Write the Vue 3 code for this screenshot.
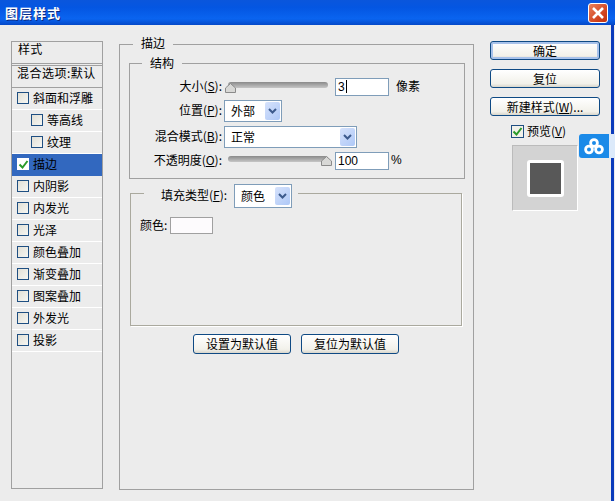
<script setup>
const styles = [
  { label: '斜面和浮雕' },
  { label: '等高线', sub: true },
  { label: '纹理', sub: true },
  { label: '描边', on: true },
  { label: '内阴影' },
  { label: '内发光' },
  { label: '光泽' },
  { label: '颜色叠加' },
  { label: '渐变叠加' },
  { label: '图案叠加' },
  { label: '外发光' },
  { label: '投影' }
]
</script>

<template>
  <div class="win">
    <header class="title">
      <span class="title-text">图层样式</span>
      <button class="close" aria-label="关闭">
        <svg width="14" height="14" viewBox="0 0 14 14"><path d="M2 2l10 10M12 2L2 12" stroke="#fff" stroke-width="2.6" fill="none"/></svg>
      </button>
    </header>
    <div class="body">
      <aside class="side">
        <div class="side-head">样式</div>
        <div class="side-blend">混合选项:默认</div>
        <div v-for="s in styles" :key="s.label" class="item" :class="{ sub: s.sub, on: s.on }">
          <span class="check">
            <svg v-if="s.on" width="11" height="11" viewBox="0 0 11 11"><path d="M1.5 5.5l3 3 5-6.5" stroke="#2a9a2a" stroke-width="2" fill="none"/></svg>
          </span>
          <span>{{ s.label }}</span>
        </div>
      </aside>

      <main class="main">
        <fieldset class="outer">
          <legend class="lg-outer">描边</legend>
          <fieldset class="struct">
            <legend class="lg-inner">结构</legend>
            <div class="row r1">
              <label class="lbl">大小(<u>S</u>):</label>
              <div class="slider">
                <svg class="thumb" width="11" height="10" viewBox="0 0 11 10"><path d="M5.5.5l5 4.5v4.500H.5V5z" fill="#d8d8d6" stroke="#8a8a8a"/></svg>
              </div>
              <div class="input focus">3<b class="caret"></b></div>
              <span class="unit">像素</span>
            </div>
            <div class="row r2">
              <label class="lbl">位置(<u>P</u>):</label>
              <div class="select w1"><span>外部</span><i class="arrow"><svg width="9" height="6" viewBox="0 0 9 6"><path d="M1 1l3.500 3.500L8 1" stroke="#3c5a8c" stroke-width="2" fill="none"/></svg></i></div>
            </div>
            <div class="row r3">
              <label class="lbl">混合模式(<u>B</u>):</label>
              <div class="select w2"><span>正常</span><i class="arrow"><svg width="9" height="6" viewBox="0 0 9 6"><path d="M1 1l3.500 3.500L8 1" stroke="#3c5a8c" stroke-width="2" fill="none"/></svg></i></div>
            </div>
            <div class="row r4">
              <label class="lbl">不透明度(<u>O</u>):</label>
              <div class="slider">
                <svg class="thumb end" width="11" height="10" viewBox="0 0 11 10"><path d="M5.5.5l5 4.500v4.500H.5V5z" fill="#d8d8d6" stroke="#8a8a8a"/></svg>
              </div>
              <div class="input">100</div>
              <span class="unit pct">%</span>
            </div>
          </fieldset>

          <fieldset class="fill">
            <legend class="lg-fill">
              <span class="fill-label">填充类型(<u>F</u>):</span>
              <div class="select w3"><span>颜色</span><i class="arrow"><svg width="9" height="6" viewBox="0 0 9 6"><path d="M1 1l3.500 3.500L8 1" stroke="#3c5a8c" stroke-width="2" fill="none"/></svg></i></div>
            </legend>
            <div class="color-row">
              <span class="color-label">颜色:</span>
              <div class="swatch"></div>
            </div>
          </fieldset>

          <div class="defaults">
            <button class="btn b2">设置为默认值</button>
            <button class="btn b2">复位为默认值</button>
          </div>
        </fieldset>
      </main>

      <aside class="actions">
        <button class="btn primary">确定</button>
        <button class="btn">复位</button>
        <button class="btn">新建样式(<u>W</u>)...</button>
        <div class="preview-check">
          <span class="check">
            <svg width="11" height="11" viewBox="0 0 11 11"><path d="M1.5 5.5l3 3 5-6.5" stroke="#2a9a2a" stroke-width="2" fill="none"/></svg>
          </span>
          <span>预览(<u>V</u>)</span>
        </div>
        <div class="preview"><div class="square"></div></div>
      </aside>
    </div>

    <div class="float">
      <svg width="20" height="17" viewBox="0 0 20 17"><g fill="none" stroke="#fff" stroke-width="2.8"><circle cx="10" cy="5" r="3.4"/><circle cx="5" cy="11.5" r="3.4"/><circle cx="15" cy="11.5" r="3.4"/></g></svg>
    </div>
  </div>
</template>

<style>
html, body { margin: 0; background: #ececec; }
</style>

<style scoped>
.win {
  position: relative;
  width: 615px;
  height: 501px;
  overflow: hidden;
  background: #ececec;
  color: #000;
  font: 12px/14px "Noto Sans CJK SC", "Liberation Sans", sans-serif;
}
.win * { box-sizing: border-box; }
u { text-decoration: underline; }

.title {
  height: 25px;
  padding: 0 7px 0 5px;
  display: flex;
  align-items: center;
  justify-content: space-between;
  background: linear-gradient(#0a56dc, #0456e2 30%, #0a64f0 75%, #0448c8);
}
.title-text {
  color: #fff;
  font-weight: 700;
  font-size: 13px;
  letter-spacing: 1px;
  text-shadow: 1px 1px 0 #0b2a80;
}
.close {
  width: 20px;
  height: 20px;
  padding: 0;
  display: flex;
  align-items: center;
  justify-content: center;
  border: 1px solid #fff;
  border-radius: 3px;
  background: linear-gradient(135deg, #e8805c, #d0401c 70%, #c03410);
}

.body {
  display: flex;
  align-items: flex-start;
  width: 614px;
  height: 476px;
  padding: 16px 0 0 11px;
  border-right: 3px solid #0b3cbc;
}

/* Style list */
.side {
  width: 92px;
  height: 448px;
  flex: none;
  border: 1px solid #a0a0a0;
}
.side-head {
  height: 22px;
  padding-left: 6px;
  line-height: 13px;
  border-bottom: 1px solid #a0a0a0;
  letter-spacing: 0.3px;
}
.side-blend {
  height: 23px;
  margin-top: 1px;
  padding: 0 0 0 5px;
  border-top: 1px solid #a0a0a0;
  border-bottom: 1px solid #a0a0a0;
  white-space: nowrap;
  letter-spacing: 0.5px;
}
.item {
  height: 22px;
  display: flex;
  align-items: center;
  gap: 4px;
  padding: 0 0 1px 5px;
  border-bottom: 1px solid #fff;
}
.item.sub { padding-left: 19px; }
.item.on { background: #3268bf; border-bottom-color: #3268bf; }
.check {
  width: 12px;
  height: 12px;
  flex: none;
  display: block;
  border: 1px solid #1f4f82;
  background: linear-gradient(135deg, #e2e0d6, #f6f6f2);
  position: relative;
}
.check svg { position: absolute; left: 0; top: 0; }
.item.on .check { background: #fff; border-color: #fff; }

/* Main */
.main { width: 355px; margin-left: 16px; flex: none; }
fieldset { margin: 0; min-width: 0; }
.outer {
  height: 454px;
  margin-top: -5px;
  padding: 0 8px 0 9px;
  border: 1px solid #a0a0a0;
}
.lg-outer { margin-left: 4px; padding: 0 8px; height: 16px; }
.struct {
  width: 336px;
  height: 123px;
  margin-top: 4px;
  padding: 0;
  border: 1px solid #a0a0a0;
}
.lg-inner { margin-left: 12px; padding: 0 8px; height: 14px; }
.row { display: flex; align-items: center; height: 18px; margin-top: 4px; }
.r1 { margin-top: 8px; }
.r2, .r3 { height: 22px; }
.lbl { width: 92px; margin-bottom: 2px; text-align: right; flex: none; white-space: nowrap; }
.slider {
  width: 100px;
  height: 6px;
  margin: 0 0 5px 6px;
  flex: none;
  border-radius: 3px;
  background: linear-gradient(#8a8a8a, #c6c6c6);
  position: relative;
}
.thumb {
  position: absolute;
  left: -3px;
  top: 1px;
}
.thumb.end { left: auto; right: -4px; top: 0; }
.input {
  width: 54px;
  height: 18px;
  margin-left: 7px;
  padding: 1px 0 0 2px;
  background: #fff;
  border: 1px solid #7f9db9;
  font-family: "Liberation Sans", sans-serif;
  flex: none;
}
.caret { display: inline-block; width: 1px; height: 13px; background: #000; vertical-align: -2px; margin-left: 1px; }
.unit { margin: 0 0 2px 7px; }
.unit.pct { margin-left: 2px; font-family: "Liberation Sans", sans-serif; }
.select {
  height: 22px;
  margin-left: 2px;
  display: flex;
  align-items: center;
  justify-content: space-between;
  padding: 0 1px 0 6px;
  background: #fff;
  border: 1px solid #7f9db9;
  flex: none;
}
.w1 { width: 58px; }
.w2 { width: 133px; }
.w3 { width: 58px; height: 24px; margin-left: 0; }
.arrow {
  width: 15px;
  height: 18px;
  display: flex;
  align-items: center;
  justify-content: center;
  border-radius: 2px;
  background: linear-gradient(135deg, #d6e2fb, #aec8f7);
}

.fill {
  width: 332px;
  height: 142px;
  margin: 5px 0 0 1px;
  padding: 0 0 0 9px;
  border: 1px solid #aaa99e;
  box-shadow: 1px 1px 0 #fff;
}
.lg-fill {
  display: flex;
  align-items: flex-start;
  margin-left: 4px;
  padding: 0 6px 0 17px;
  height: 18px;
}
.fill-label { width: 73px; line-height: 22px; white-space: nowrap; }
.color-row { display: flex; align-items: center; gap: 3px; margin-top: 15px; height: 17px; }
.color-label { margin-bottom: 2px; }
.swatch { width: 43px; height: 17px; background: #fdfbfd; border: 1px solid #a0a0a0; }
.defaults { display: flex; gap: 10px; margin: 8px 0 0 64px; }

/* Buttons */
.btn {
  width: 110px;
  height: 19px;
  padding: 0;
  font: inherit;
  color: #000;
  border: 1px solid #0f4a84;
  border-radius: 3px;
  background: linear-gradient(#fff, #f2f1ea 80%, #d8d6cc);
  white-space: nowrap;
}
.b2 { width: 98px; height: 20px; }
.primary { box-shadow: inset 0 0 0 2px #a8c2ea; }

.actions {
  width: 110px;
  margin-left: 16px;
  flex: none;
  display: flex;
  flex-direction: column;
  align-items: flex-start;
  gap: 9px;
}
.preview-check {
  display: flex;
  align-items: center;
  gap: 3px;
  margin: -1px 0 0 21px;
  height: 14px;
  white-space: nowrap;
}
.preview-check .check { width: 13px; height: 13px; background: #f1f1ea; }
.preview {
  width: 66px;
  height: 66px;
  margin: -2px 0 0 22px;
  display: flex;
  align-items: center;
  justify-content: center;
  background: #d3d3d3;
  border: 1px solid #bbb;
  border-bottom-color: #fff;
  border-right-color: #fff;
}
.square {
  width: 37px;
  height: 37px;
  background: #585858;
  border: 3px solid #fff;
  border-radius: 3px;
}

.float {
  position: absolute;
  right: 0;
  top: 134px;
  width: 36px;
  height: 24px;
  padding: 4px 0 0 5px;
  border-radius: 3px 0 0 3px;
  background: linear-gradient(90deg, #1b8ae8 0 30px, #dceafa 30px);
}
</style>
